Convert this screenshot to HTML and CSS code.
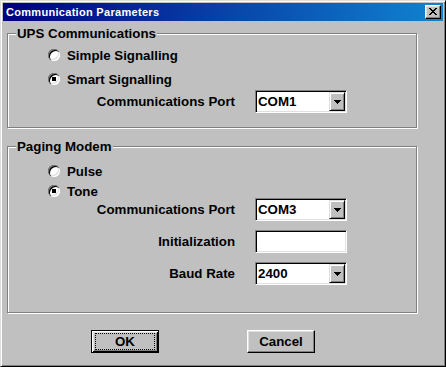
FILE: index.html
```html
<!DOCTYPE html>
<html lang="en">
  <head>
    <meta charset="UTF-8" />
    <title>Communication Parameters</title>
    <link rel="stylesheet" href="styles.css">
  </head>
  <body>
    <div class="window">
      <div class="titlebar">
        <span class="title">Communication Parameters</span>
        <span class="close">
          <svg width="8" height="7" viewBox="0 0 8 7" shape-rendering="crispEdges">
            <path fill="#000" d="M0 0h2v1h-2z M6 0h2v1h-2z M1 1h2v1h-2z M5 1h2v1h-2z M2 2h4v1h-4z M3 3h2v1h-2z M2 4h4v1h-4z M1 5h2v1h-2z M5 5h2v1h-2z M0 6h2v1h-2z M6 6h2v1h-2z" />
          </svg>
        </span>
      </div>
      <div class="content">
        <fieldset class="group group-ups">
          <legend>UPS Communications</legend>
          <div class="radio r-top"><span class="mark"></span>Simple Signalling</div>
          <div class="radio r-next"><span class="mark checked"></span>Smart Signalling</div>
          <div class="field f-ups">
            <span class="label">Communications Port</span>
            <div class="combo">
              <span class="value">COM1</span>
              <span class="drop">
                <svg width="7" height="4" viewBox="0 0 7 4" shape-rendering="crispEdges"><path fill="#000" d="M0 0h7v1h-1v1h-1v1h-1v1h-1v-1h-1v-1h-1v-1h-1z" /></svg>
              </span>
            </div>
          </div>
        </fieldset>
        <fieldset class="group group-modem">
          <legend>Paging Modem</legend>
          <div class="radio r-top"><span class="mark"></span>Pulse</div>
          <div class="radio r-tone"><span class="mark checked"></span>Tone</div>
          <div class="field">
            <span class="label">Communications Port</span>
            <div class="combo">
              <span class="value">COM3</span>
              <span class="drop">
                <svg width="7" height="4" viewBox="0 0 7 4" shape-rendering="crispEdges"><path fill="#000" d="M0 0h7v1h-1v1h-1v1h-1v1h-1v-1h-1v-1h-1v-1h-1z" /></svg>
              </span>
            </div>
          </div>
          <div class="field f-gap">
            <span class="label">Initialization</span>
            <div class="combo"></div>
          </div>
          <div class="field f-gap">
            <span class="label">Baud Rate</span>
            <div class="combo">
              <span class="value">2400</span>
              <span class="drop">
                <svg width="7" height="4" viewBox="0 0 7 4" shape-rendering="crispEdges"><path fill="#000" d="M0 0h7v1h-1v1h-1v1h-1v1h-1v-1h-1v-1h-1v-1h-1z" /></svg>
              </span>
            </div>
          </div>
        </fieldset>
        <div class="buttons">
          <div class="btn default"><span class="focus">OK</span></div>
          <div class="btn">Cancel</div>
        </div>
      </div>
    </div>
  </body>
</html>
```
FILE: styles.css
```css
* {
  box-sizing: border-box;
}
body {
  margin: 0;
  background: #c0c0c0;
  font-family: "Liberation Sans", Arial, sans-serif;
  font-size: 13.3px;
  font-weight: bold;
  color: #000;
}
.window {
  width: 446px;
  height: 367px;
  background: #c0c0c0;
  border: 1px solid;
  border-color: #dfdfdf #000 #000 #dfdfdf;
  box-shadow: inset 1px 1px #fff, inset -1px -1px #808080;
  padding: 2px;
  display: flex;
  flex-direction: column;
}
.titlebar {
  height: 18px;
  background: linear-gradient(to right, #000080, #1084d0);
  display: flex;
  align-items: center;
  justify-content: space-between;
  padding: 0 2px 0 3px;
}
.title {
  color: #fff;
  font-size: 11px;
  letter-spacing: 0.3px;
}
.close {
  width: 16px;
  height: 14px;
  background: #c0c0c0;
  border: 1px solid;
  border-color: #fff #000 #000 #fff;
  box-shadow: inset -1px -1px #808080, inset 1px 1px #dfdfdf;
  padding: 2px 0 0 3px;
  display: flex;
  align-items: flex-start;
}
.close svg {
  display: block;
}
.content {
  flex: 1;
  padding: 5px 0 0 4px;
  display: flex;
  flex-direction: column;
}
.group {
  margin: 0;
  width: 410px;
  min-width: 0;
  border: 1px solid #808080;
  box-shadow: 1px 1px #fff, inset 1px 1px #fff;
  padding: 0 8px;
}
.group legend {
  padding: 0 1px;
  line-height: 15px;
  background: #c0c0c0;
}
.group-ups {
  height: 102px;
  padding-top: 7px;
}
.group-modem {
  height: 174px;
  margin-top: 11px;
  padding-top: 10px;
}
.radio {
  display: flex;
  align-items: center;
  gap: 7px;
  height: 14px;
  padding-left: 32px;
}
.r-next {
  margin-top: 10px;
}
.r-tone {
  margin-top: 6px;
}
.mark {
  width: 12px;
  height: 12px;
  border-radius: 50%;
  background: #fff;
  box-shadow: inset 1px 1px #808080, inset 2px 2px #000, inset -1px -1px #fff, inset -2px -2px #dfdfdf;
  display: flex;
  align-items: center;
  justify-content: center;
}
.mark.checked::after {
  content: "";
  width: 4px;
  height: 4px;
  background: #000;
}
.field {
  display: flex;
  align-items: center;
  gap: 20px;
  height: 23px;
}
.f-ups {
  margin-top: 4px;
}
.f-gap {
  margin-top: 9px;
}
.label {
  width: 219px;
  text-align: right;
}
.combo {
  width: 92px;
  height: 23px;
  background: #fff;
  border: 1px solid;
  border-color: #808080 #fff #fff #808080;
  box-shadow: inset 1px 1px #000, inset -1px -1px #dfdfdf;
  padding: 1px;
  display: flex;
  align-items: center;
}
.value {
  flex: 1;
  padding-left: 1px;
}
.drop {
  width: 16px;
  height: 19px;
  background: #c0c0c0;
  border: 1px solid;
  border-color: #dfdfdf #000 #000 #dfdfdf;
  box-shadow: inset 1px 1px #fff, inset -1px -1px #808080;
  display: flex;
  align-items: center;
  justify-content: center;
}
.drop svg {
  display: block;
}
.buttons {
  display: flex;
  gap: 88px;
  margin-top: 17px;
  padding-left: 84px;
}
.btn {
  width: 68px;
  height: 23px;
  border: 1px solid;
  border-color: #fff #000 #000 #fff;
  box-shadow: inset -1px -1px #808080, inset 1px 1px #dfdfdf;
  display: flex;
  align-items: center;
  justify-content: center;
}
.btn.default {
  border-color: #000;
  box-shadow: inset 1px 1px #fff, inset -1px -1px #000, inset 2px 2px #dfdfdf, inset -2px -2px #808080;
  padding: 2px 3px;
  align-items: stretch;
}
.focus {
  flex: 1;
  border: 1px dotted #000;
  display: flex;
  align-items: center;
  justify-content: center;
}
```
